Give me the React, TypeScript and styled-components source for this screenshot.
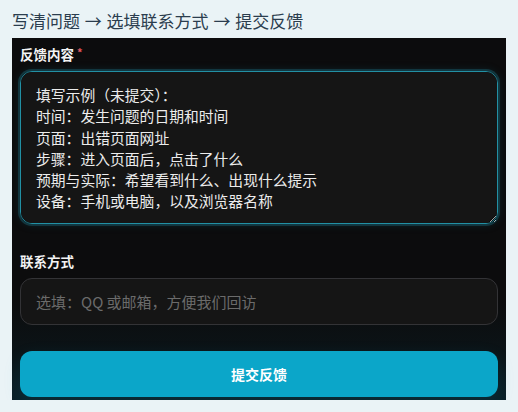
import React, { useEffect, useRef } from 'react';
import styled, { createGlobalStyle } from 'styled-components';

const GlobalStyle = createGlobalStyle`
  html, body {
    margin: 0;
    padding: 0;
    background: #eaf3f6;
    font-family: 'Noto Sans CJK SC', 'Noto Sans', sans-serif;
  }
  * {
    box-sizing: border-box;
  }
`;

interface gapType {
  top: number;
}

const Page = styled.div`
  padding: 10px 12px 0;
`;

const Steps = styled.div`
  font-size: 17px;
  line-height: 22px;
  word-spacing: 1px;
  color: #2b3d4e;
  margin-bottom: 6px;
`;

const Panel = styled.form`
  height: 362px;
  padding: 5px 8px 3px;
  display: flex;
  flex-direction: column;
  background: linear-gradient(
    to bottom,
    #0c0c0d 0%,
    #0c0c0d 72%,
    #0b1519 90%,
    #0a1f27 100%
  );
`;

const Label = styled.label<gapType>`
  display: block;
  margin-top: ${(props) => props.top}px;
  font-size: 13.5px;
  line-height: 18px;
  font-weight: 700;
  color: #f3f3f3;
  .star {
    color: #e0575f;
    font-size: 11px;
    margin-left: 3px;
    vertical-align: 3px;
  }
`;

const TextArea = styled.textarea`
  display: block;
  margin-top: 8px;
  width: 100%;
  height: 153px;
  padding: 12px 15px;
  font-family: inherit;
  font-size: 14.8px;
  line-height: 21.3px;
  color: #ececec;
  caret-color: #ffffff;
  background: #151515;
  border: 1px solid #2290a4;
  border-radius: 12px;
  box-shadow: 0 0 0 2px rgba(28, 104, 122, 0.4), 0 0 10px rgba(20, 120, 140, 0.25);
  outline: none;
  resize: vertical;
`;

const TextInput = styled.input`
  display: block;
  margin-top: 8px;
  width: 100%;
  height: 47px;
  padding: 0 15px;
  font-family: inherit;
  font-size: 15px;
  color: #e6e6e6;
  background: #151515;
  border: 1px solid #333336;
  border-radius: 12px;
  outline: none;
  &::placeholder {
    color: #6b6b6b;
  }
`;

const SubmitButton = styled.button`
  margin-top: 26px;
  width: 100%;
  height: 46px;
  border: none;
  border-radius: 12px;
  background: #0ba6c9;
  color: #ffffff;
  font-family: inherit;
  font-size: 14px;
  font-weight: 700;
  box-shadow: 0 6px 18px rgba(11, 166, 201, 0.12);
  cursor: pointer;
`;

const sample = `填写示例（未提交）：
时间：发生问题的日期和时间
页面：出错页面网址
步骤：进入页面后，点击了什么
预期与实际：希望看到什么、出现什么提示
设备：手机或电脑，以及浏览器名称`;

function App() {
  const areaRef = useRef<HTMLTextAreaElement>(null);

  useEffect(() => {
    const el = areaRef.current;
    if (el) {
      el.focus();
      el.setSelectionRange(el.value.length, el.value.length);
    }
  }, []);

  return (
    <Page>
      <GlobalStyle />
      <Steps>写清问题 → 选填联系方式 → 提交反馈</Steps>
      <Panel onSubmit={(e) => e.preventDefault()}>
        <Label top={0}>
          反馈内容<span className="star">*</span>
        </Label>
        <TextArea ref={areaRef} defaultValue={sample} />
        <Label top={28}>联系方式</Label>
        <TextInput type="text" placeholder="选填：QQ 或邮箱，方便我们回访" />
        <SubmitButton type="submit">提交反馈</SubmitButton>
      </Panel>
    </Page>
  );
}

export default App;
